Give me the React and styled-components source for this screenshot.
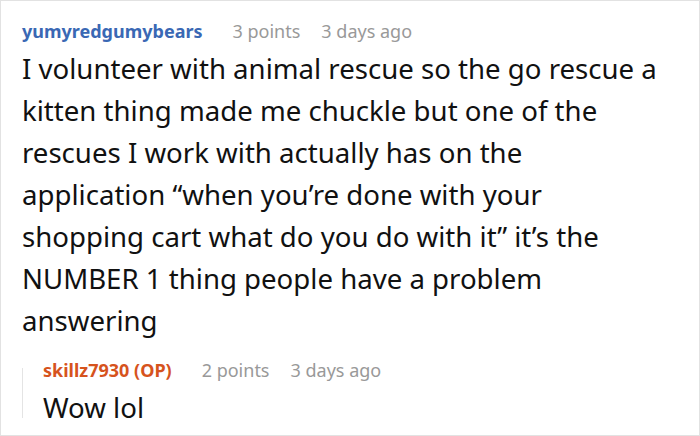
import React from "react";
import styled, { createGlobalStyle } from "styled-components";

const Global = createGlobalStyle`
  html, body { margin: 0; padding: 0; background: #fff; }
  body { font-family: "Noto Sans", "Open Sans", sans-serif; }
`;

const Frame = styled.div`
  box-sizing: border-box;
  width: 700px;
  height: 436px;
  border: 1px solid #e2e2e2;
  padding: 17px 36px 0 21px;
  overflow: hidden;
`;

const Comment = styled.div`
  display: flex;
  flex-direction: column;
`;

const Meta = styled.div`
  display: flex;
  align-items: baseline;
  gap: 21px;
  font-size: 18px;
  line-height: 27px;
`;

const Author = styled.span`
  font-weight: 700;
  color: ${(p) => p.$color};
  margin-right: 9px;
`;

const Info = styled.span`
  color: #999;
`;

const Body = styled.div`
  font-size: 27.6px;
  line-height: 42px;
  color: #111;
  margin-top: 2px;
`;

const Reply = styled.div`
  position: relative;
  margin-top: 16px;
  padding-left: 21px;

  &::before {
    content: "";
    position: absolute;
    left: 0;
    top: 11px;
    height: 50px;
    border-left: 1px solid #e4e4e4;
  }
`;

export default function App() {
  return (
    <>
      <Global />
      <Frame>
        <Comment>
          <Meta>
            <Author $color="#3a68b4">yumyredgumybears</Author>
            <Info>3 points</Info>
            <Info>3 days ago</Info>
          </Meta>
          <Body>
            I volunteer with animal rescue so the go rescue a kitten thing made
            me chuckle but one of the rescues I work with actually has on the
            application “when you’re done with your shopping cart what do you
            do with it” it’s the NUMBER 1 thing people have a problem answering
          </Body>
        </Comment>
        <Reply>
          <Comment>
            <Meta>
              <Author $color="#d6531d">skillz7930 (OP)</Author>
              <Info>2 points</Info>
              <Info>3 days ago</Info>
            </Meta>
            <Body>Wow lol</Body>
          </Comment>
        </Reply>
      </Frame>
    </>
  );
}
